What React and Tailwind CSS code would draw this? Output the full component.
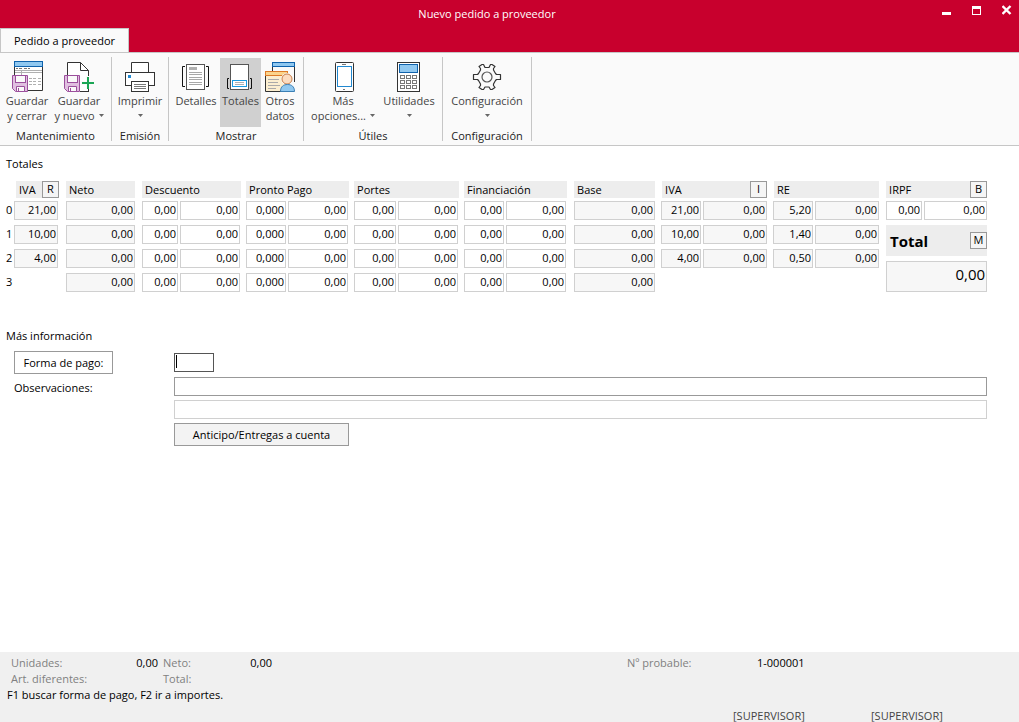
import React from "react";

const columns = [10, 52, 76, 38, 66, 42, 66, 44, 66, 42, 68, 87, 42, 70, 42, 71, 38, 63];

const rows = [
  { iva: "21,00", re: "5,20" },
  { iva: "10,00", re: "1,40" },
  { iva: "4,00", re: "0,50" },
  { iva: null, re: null },
];

const SaveDisk = () => (
  <>
    <path d="M1.5 15.5h15v16h-12l-3-3z" fill="#e0bfe0" stroke="#9b4f9c" />
    <rect x="4.5" y="15.5" width="10" height="7" fill="#fafafa" stroke="#9b4f9c" />
    <path d="M5.5 31.5v-5h8v5z" fill="#fafafa" stroke="#9b4f9c" />
    <path d="M7.5 28v3" stroke="#9b4f9c" />
  </>
);

const SaveCloseIcon = () => (
  <svg width="32" height="32" viewBox="0 0 32 32" fill="none">
    <path d="M3.5 6v24.5h28V6" fill="#fff" stroke="#333" />
    <rect x="3.5" y="1.5" width="28" height="5" fill="#90c8f0" stroke="#0f62ac" />
    <path d="M5 8.5h2M8 8.5h3M13 8.5h3M17 8.5h2" stroke="#777" />
    <path d="M4 10.5h27M4 12.5h27M10.5 11v5" stroke="#b0b0b0" />
    <path d="M18 18.5h3M22 18.5h3M27 18.5h3M18 21.5h3M22 21.5h3M27 21.5h3M18 24.5h3M22 24.5h3M27 24.5h3" stroke="#b0b0b0" />
    <SaveDisk />
  </svg>
);

const SaveNewIcon = () => (
  <svg width="32" height="32" viewBox="0 0 32 32" fill="none">
    <path d="M4.5 31V2.500h13l8 8V31" fill="#fff" stroke="#333" />
    <path d="M17.5 2.5v8h8" stroke="#333" />
    <path d="M17 31.5h9" stroke="#333" />
    <SaveDisk />
    <path d="M25 16v13M18 23h14" stroke="#fafafa" strokeWidth="4" />
    <path d="M25 17v12M19 23h12" stroke="#1aa654" strokeWidth="2" />
  </svg>
);

const PrinterIcon = () => (
  <svg width="32" height="32" viewBox="0 0 32 32" fill="none" stroke="#333">
    <path d="M7.5 12.5v-10h17v10" fill="#fff" />
    <rect x="1.5" y="12.5" width="29" height="13" fill="#fff" />
    <rect x="7.5" y="21.5" width="17" height="10" fill="#fff" />
    <path d="M10 24.5h12M10 26.5h12M10 28.5h12" stroke="#777" />
    <rect x="4" y="15" width="3" height="3" fill="#2188d0" stroke="none" />
  </svg>
);

const DetailsIcon = () => (
  <svg width="32" height="32" viewBox="0 0 32 32" fill="none" stroke="#111">
    <rect x="6.5" y="4.5" width="18" height="25" fill="#fff" stroke="#555" />
    <rect x="9" y="7" width="8" height="3" fill="#b0b0b0" stroke="none" />
    <path d="M9 12.5h13M9 14.5h13M9 17.5h13M9 19.5h13M9 22.5h13M9 24.5h13" stroke="#a8a8a8" />
    <path d="M5 6.5H2.500v20H5M26 6.500h2.500v20H26" />
  </svg>
);

const TotalsIcon = () => (
  <svg width="33" height="32" viewBox="0 0 33 32" fill="none" stroke="#111">
    <rect x="6.5" y="4.5" width="18" height="25" fill="#fff" stroke="#555" />
    <rect x="8.5" y="20.5" width="14" height="6" fill="#fff" stroke="#1b9be0" />
    <path d="M11 22.5h9M11 24.5h9" stroke="#b0b0b0" />
    <path d="M5 18.5H3.5v10H5M26 18.5h1.5v10H26" />
  </svg>
);

const OtherDataIcon = () => (
  <svg width="32" height="32" viewBox="0 0 32 32" fill="none">
    <path d="M8.5 6v5M30.5 7v15" stroke="#333" />
    <rect x="8.5" y="2.5" width="22" height="4" fill="#90c8f0" stroke="#0f62ac" />
    <path d="M1.5 15v16.5h22V15" fill="#fbeed0" stroke="#333" />
    <rect x="1.5" y="11.5" width="22" height="4" fill="#fbd48c" stroke="#dd7b28" />
    <path d="M4 19.5h11M4 22.5h10M4 25.5h12M4 28.5h8" stroke="#aaa" />
    <circle cx="23" cy="19" r="6" fill="#fafafa" />
    <circle cx="23" cy="19" r="5" fill="#fcdcc0" stroke="#c77f4c" />
    <path d="M16.5 31.5c0-5 3-7 7-7s7 2 7 7z" fill="#90c8f0" stroke="#3b7fb4" />
  </svg>
);

const PhoneIcon = () => (
  <svg width="32" height="32" viewBox="0 0 32 32" fill="none" stroke="#333">
    <rect x="8.5" y="2.5" width="18" height="29" rx="1" fill="#fff" />
    <rect x="10.5" y="6.5" width="14" height="20" fill="#fff" stroke="#2188d0" />
    <path d="M15 4.5h4M16 29.5h2" stroke="#777" />
  </svg>
);

const CalculatorIcon = () => (
  <svg width="32" height="32" viewBox="0 0 32 32" fill="none" stroke="#333">
    <rect x="4.5" y="2.5" width="22" height="29" fill="#fff" />
    <rect x="6.5" y="4.5" width="18" height="8" fill="#90c8f0" stroke="#0f62ac" />
    {[15, 20, 25].map((y) =>
      [7, 13, 19].map((x) => (
        <rect key={`${x}-${y}`} x={x + 0.5} y={y + 0.5} width="4" height="3" stroke="#777" />
      ))
    )}
  </svg>
);

const GearIcon = () => (
  <svg width="32" height="32" viewBox="0 0 32 32" fill="none" stroke="#333" strokeLinejoin="round">
    <path
      d="M2.500 14.500h4l1-1 2-3.500v-1.500L8 6.500 11 4.500h1.500l1.500 3h4l1.500-3H21l3 2-1.500 2V10l2 3.500 1 1h4v5h-4l-1 1-2 3.500v1.500l1.500 2-3 2h-1.500l-1.500-2.500h-4l-1.500 2.500H11l-3-2 1.500-2V24l-2-3.500-1-1h-4z"
      fill="#fafafa"
      strokeWidth="1.2"
    />
    <circle cx="16" cy="17" r="5" stroke="#555" strokeWidth="1.2" />
  </svg>
);

const Arrow = () => (
  <svg width="5" height="3" viewBox="0 0 5 3" className="inline-block">
    <path d="M0 0h5L2.5 3z" fill="#666" />
  </svg>
);

const RibbonButton = ({ icon, line1, line2, arrow, active, width }) => (
  <button
    type="button"
    className={`flex h-[69px] flex-col items-center pt-[2px] text-[#444] whitespace-nowrap ${width} ${active ? "bg-[#d0d0d0]" : ""}`}
  >
    {icon}
    <span className="mt-px leading-[15px]">{line1}</span>
    <span className="flex h-[15px] items-center gap-1 leading-[15px]">
      {line2}
      {arrow && <Arrow />}
    </span>
  </button>
);

const RibbonGroup = ({ label, pad = "justify-center", width, children }) => (
  <section className={`my-1 flex h-[84px] flex-none flex-col border-r border-[#c6c6c6] ${width}`}>
    <div className={`flex h-[72px] pt-px ${pad}`}>{children}</div>
    <h2 className="text-center leading-[18px] text-[#222]">{label}</h2>
  </section>
);

const KeyButton = ({ children }) => (
  <button type="button" className="h-[17px] w-[17px] border border-[#999] bg-[#f5f5f5] pb-[2px] leading-[13px]">
    {children}
  </button>
);

const Heading = ({ span = 1, pad = "pr-[5px]", button, children }) => (
  <th colSpan={span} scope="colgroup" className={`p-0 pb-[3px] text-left font-normal ${pad}`}>
    <div className="flex h-[17px] items-center justify-between bg-[#ededed] pl-[3px]">
      <span className="pt-[2px]">{children}</span>
      {button && <KeyButton>{button}</KeyButton>}
    </div>
  </th>
);

const Cell = ({ label, value, locked, pad = "pr-[2px]" }) => (
  <td className={`p-0 pb-[5px] ${pad}`}>
    {value && (
      <input
        aria-label={label}
        defaultValue={value}
        readOnly={locked}
        className={`block h-[19px] w-full border border-[#d0d0d0] pr-px pb-[2px] text-right ${locked ? "bg-[#f7f7f7]" : "bg-white"}`}
      />
    )}
  </td>
);

const TotalsTable = () => (
  <table className="w-full table-fixed border-separate border-spacing-0">
    <colgroup>
      {columns.map((w, i) => (
        <col key={i} style={{ width: w }} />
      ))}
    </colgroup>
    <thead>
      <tr>
        <td className="p-0" />
        <Heading pad="pl-[2px] pr-[7px]" button="R">IVA</Heading>
        <Heading pad="pr-[7px]">Neto</Heading>
        <Heading span={2}>Descuento</Heading>
        <Heading span={2}>Pronto Pago</Heading>
        <Heading span={2}>Portes</Heading>
        <Heading span={2} pad="pr-[7px]">Financiación</Heading>
        <Heading pad="pr-[6px]">Base</Heading>
        <Heading span={2} pad="pl-px pr-[6px]" button="I">IVA</Heading>
        <Heading span={2} pad="pl-px pr-[7px]">RE</Heading>
        <Heading span={2} pad="pr-0" button="B">IRPF</Heading>
      </tr>
    </thead>
    <tbody>
      {rows.map((row, i) => (
        <tr key={i}>
          <th scope="row" className="p-0 pb-[5px] pl-[2px] text-left font-normal">{i}</th>
          <Cell label={`IVA ${i}`} value={row.iva} locked pad="pr-[8px]" />
          <Cell label={`Neto ${i}`} value="0,00" locked pad="pr-[7px]" />
          <Cell label={`% Descuento ${i}`} value="0,00" />
          <Cell label={`Descuento ${i}`} value="0,00" pad="pr-[6px]" />
          <Cell label={`% Pronto Pago ${i}`} value="0,000" />
          <Cell label={`Pronto Pago ${i}`} value="0,00" pad="pr-[6px]" />
          <Cell label={`% Portes ${i}`} value="0,00" />
          <Cell label={`Portes ${i}`} value="0,00" pad="pr-[6px]" />
          <Cell label={`% Financiación ${i}`} value="0,00" />
          <Cell label={`Financiación ${i}`} value="0,00" pad="pr-[8px]" />
          <Cell label={`Base ${i}`} value="0,00" locked pad="pr-[6px]" />
          <Cell label={`% IVA ${i}`} value={row.iva} locked />
          <Cell label={`Importe IVA ${i}`} value={row.iva && "0,00"} locked pad="pr-[6px]" />
          <Cell label={`% RE ${i}`} value={row.re} locked />
          <Cell label={`RE ${i}`} value={row.re && "0,00"} locked pad="pr-[7px]" />
          {i === 0 && (
            <>
              <Cell label="% IRPF" value="0,00" />
              <Cell label="IRPF" value="0,00" pad="pr-0" />
            </>
          )}
          {i === 1 && (
            <td colSpan={2} rowSpan={3} className="p-0 align-top">
              <div className="flex h-[31px] items-center justify-between bg-[#ededed] pl-1">
                <label htmlFor="total" className="pt-[2px] text-[15px] font-bold">Total</label>
                <KeyButton>M</KeyButton>
              </div>
              <input
                id="total"
                readOnly
                defaultValue="0,00"
                className="mt-[5px] block h-[31px] w-full border border-[#d0d0d0] bg-[#f7f7f7] pr-px pb-[6px] text-right text-[15px]"
              />
            </td>
          )}
        </tr>
      ))}
    </tbody>
  </table>
);

const App = () => (
  <div className="flex min-h-screen flex-col bg-white font-['Open_Sans','Noto_Sans',sans-serif] text-[11px] text-black">
    <header className="bg-[#c8002d]">
      <div className="flex h-7 text-white">
        <h1 className="flex-1 pl-8 text-center leading-[28px]">Nuevo pedido a proveedor</h1>
        <div className="flex w-[77px] items-start gap-[21px] pt-[5px]">
          <button type="button" aria-label="Minimizar">
            <svg width="9" height="10" viewBox="0 0 9 10"><path d="M0 7h9v3H0z" fill="#fff" /></svg>
          </button>
          <button type="button" aria-label="Maximizar">
            <svg width="9" height="10" viewBox="0 0 9 10"><path d="M0 1h9v9H0zM1 4v5h7V4z" fill="#fff" fillRule="evenodd" /></svg>
          </button>
          <button type="button" aria-label="Cerrar">
            <svg width="10" height="10" viewBox="0 0 10 10"><path d="M0.500 1l8 8M8.500 1l-8 8" stroke="#fff" strokeWidth="2.400" /></svg>
          </button>
        </div>
      </div>
      <nav className="flex h-6">
        <button type="button" className="h-[25px] w-[129px] border border-b-0 border-[#c6c6c6] bg-[#fafafa]">
          Pedido a proveedor
        </button>
      </nav>
    </header>

    <div className="flex border-t border-b border-[#c6c6c6] bg-[#fafafa]">
      <RibbonGroup label="Mantenimiento" width="w-[112px]" pad="pl-px">
        <RibbonButton icon={<SaveCloseIcon />} line1="Guardar" line2="y cerrar" width="w-[52px]" />
        <RibbonButton icon={<SaveNewIcon />} line1="Guardar" line2="y nuevo" arrow width="w-[52px]" />
      </RibbonGroup>
      <RibbonGroup label="Emisión" width="w-[57px]">
        <RibbonButton icon={<PrinterIcon />} line1="Imprimir" arrow width="w-[52px]" />
      </RibbonGroup>
      <RibbonGroup label="Mostrar" width="w-[135px]" pad="pl-[3px]">
        <RibbonButton icon={<DetailsIcon />} line1="Detalles" width="w-[48px]" />
        <RibbonButton icon={<TotalsIcon />} line1="Totales" active width="w-[41px]" />
        <RibbonButton icon={<OtherDataIcon />} line1="Otros" line2="datos" width="w-[38px]" />
      </RibbonGroup>
      <RibbonGroup label="Útiles" width="w-[139px]">
        <RibbonButton icon={<PhoneIcon />} line1="Más" line2="opciones..." arrow width="w-[72px]" />
        <RibbonButton icon={<CalculatorIcon />} line1="Utilidades" arrow width="w-[60px]" />
      </RibbonGroup>
      <RibbonGroup label="Configuración" width="w-[89px]">
        <RibbonButton icon={<GearIcon />} line1="Configuración" arrow width="w-[80px]" />
      </RibbonGroup>
    </div>

    <main className="flex-1 pt-[10px] pr-8 pl-1">
      <h2 className="mb-[9px] pl-[2px] leading-4">Totales</h2>
      <TotalsTable />

      <h2 className="mt-[31px] mb-[7px] pl-[2px] leading-4">Más información</h2>
      <div className="flex pl-[10px]">
        <div className="w-40 flex-none">
          <button type="button" className="block h-[23px] w-[99px] border border-[#999] bg-white pt-[2px]">
            Forma de pago:
          </button>
          <label htmlFor="notes" className="mt-[6px] block leading-4">Observaciones:</label>
        </div>
        <div className="flex-1 pt-[2px]">
          <div className="relative w-10">
            <input aria-label="Forma de pago" className="block h-[19px] w-full border border-[#555] px-1 outline-none" />
            <span className="absolute top-[2px] left-[2px] h-[13px] w-px bg-black" />
          </div>
          <input id="notes" className="mt-[5px] block h-[19px] w-full border border-[#999] px-1" />
          <input aria-label="Observaciones, línea 2" className="mt-1 block h-[19px] w-full border border-[#d0d0d0] px-1" />
          <button type="button" className="mt-1 block h-[23px] w-[175px] border border-[#999] bg-[#f3f3f3] pt-[2px]">
            Anticipo/Entregas a cuenta
          </button>
        </div>
      </div>
    </main>

    <footer className="flex h-[70px] flex-col overflow-hidden bg-[#f0f0f0] pt-[3px] leading-4">
      <div className="flex pl-[11px] text-[#808080]">
        <span className="w-[100px]">Unidades:</span>
        <span className="w-[47px] text-right text-black">0,00</span>
        <span className="ml-[5px] w-[60px]">Neto:</span>
        <span className="w-[49px] text-right text-black">0,00</span>
        <span className="ml-auto w-[130px]">Nº probable:</span>
        <span className="w-[262px] text-black">1-000001</span>
      </div>
      <div className="flex pl-[11px] text-[#808080]">
        <span className="w-[152px]">Art. diferentes:</span>
        <span>Total:</span>
      </div>
      <p className="pl-[7px]">F1 buscar forma de pago, F2 ir a importes.</p>
      <div className="mt-[5px] flex justify-end text-[#444]">
        <span className="w-[138px]">[SUPERVISOR]</span>
        <span className="w-[148px]">[SUPERVISOR]</span>
      </div>
    </footer>
  </div>
);

export default App;
